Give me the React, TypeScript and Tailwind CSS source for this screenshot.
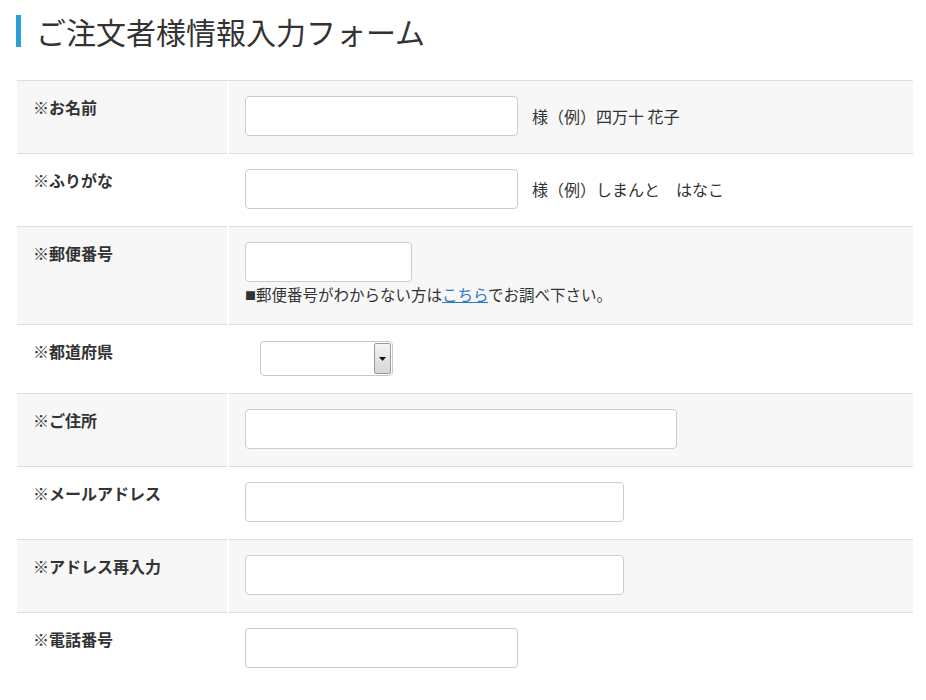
import React from "react";

const font = { fontFamily: '"Noto Sans CJK JP", "Noto Sans", sans-serif' };

type Row = {
  label: string;
  field: React.ReactNode;
};

function TextInput({ width }: { width: string }) {
  return (
    <input
      type="text"
      className={`${width} h-10 rounded-[4px] border border-[#cccccc] bg-white px-2 outline-none`}
    />
  );
}

function PrefSelect() {
  return (
    <div className="ml-[15px] mt-[1px] flex h-[35px] w-[133px] rounded-[4px] border border-[#c8c8c8] bg-white">
      <div className="flex-1" />
      <div className="my-[1px] mr-[1px] flex w-[17px] items-center justify-center rounded-[2px] border border-[#9a9a9a] bg-gradient-to-b from-[#f4f4f4] to-[#d6d6d6]">
        <svg width="7" height="4" viewBox="0 0 7 4">
          <path d="M0 0 L7 0 L3.5 4 Z" fill="#111" />
        </svg>
      </div>
    </div>
  );
}

export default function App() {
  const rows: Row[] = [
    {
      label: "※お名前",
      field: (
        <div className="flex items-center gap-[14px]">
          <TextInput width="w-[273px]" />
          <span className="text-[16px] text-[#333]">様（例）四万十 花子</span>
        </div>
      ),
    },
    {
      label: "※ふりがな",
      field: (
        <div className="flex items-center gap-[14px]">
          <TextInput width="w-[273px]" />
          <span className="text-[16px] text-[#333]">様（例）しまんと　はなこ</span>
        </div>
      ),
    },
    {
      label: "※郵便番号",
      field: (
        <div className="flex flex-col items-start">
          <TextInput width="w-[167px]" />
          <p className="text-[15.5px] leading-[24px] text-[#333]">
            <span className="text-[11px] align-[1px]">■</span>郵便番号がわからない方は
            <a href="#" className="text-[#2f78c4] underline">
              こちら
            </a>
            でお調べ下さい。
          </p>
        </div>
      ),
    },
    { label: "※都道府県", field: <PrefSelect /> },
    { label: "※ご住所", field: <TextInput width="w-[432px]" /> },
    { label: "※メールアドレス", field: <TextInput width="w-[379px]" /> },
    { label: "※アドレス再入力", field: <TextInput width="w-[379px]" /> },
    { label: "※電話番号", field: <TextInput width="w-[273px]" /> },
  ];

  return (
    <div className="min-h-[700px] bg-white text-[#333]" style={font}>
      <div className="pt-[15px] pl-4">
        <h1 className="flex h-8 items-center border-l-[5px] border-[#2a9fd8] pl-[15px] text-[30px] font-normal leading-8 text-[#333]">
          ご注文者様情報入力フォーム
        </h1>
      </div>

      <div className="ml-[17px] mt-[33px] grid w-[896px] grid-cols-[210px_1fr] gap-x-[2px] border-t border-[#dddddd]">
        {rows.map((row, i) => {
          const last = i === rows.length - 1;
          const bg = i % 2 === 0 ? "bg-[#f7f7f7]" : "bg-white";
          return (
            <React.Fragment key={row.label}>
              <div
                className={`pt-[15px] pl-4 text-[16px] font-bold leading-[22px] ${bg} ${
                  last ? "" : "border-b border-[#dddddd]"
                }`}
              >
                {row.label}
              </div>
              <div
                className={`pt-[15px] pb-[17px] pl-4 ${bg} ${
                  last ? "pb-8" : "border-b border-[#dddddd]"
                }`}
              >
                {row.field}
              </div>
            </React.Fragment>
          );
        })}
      </div>
    </div>
  );
}
